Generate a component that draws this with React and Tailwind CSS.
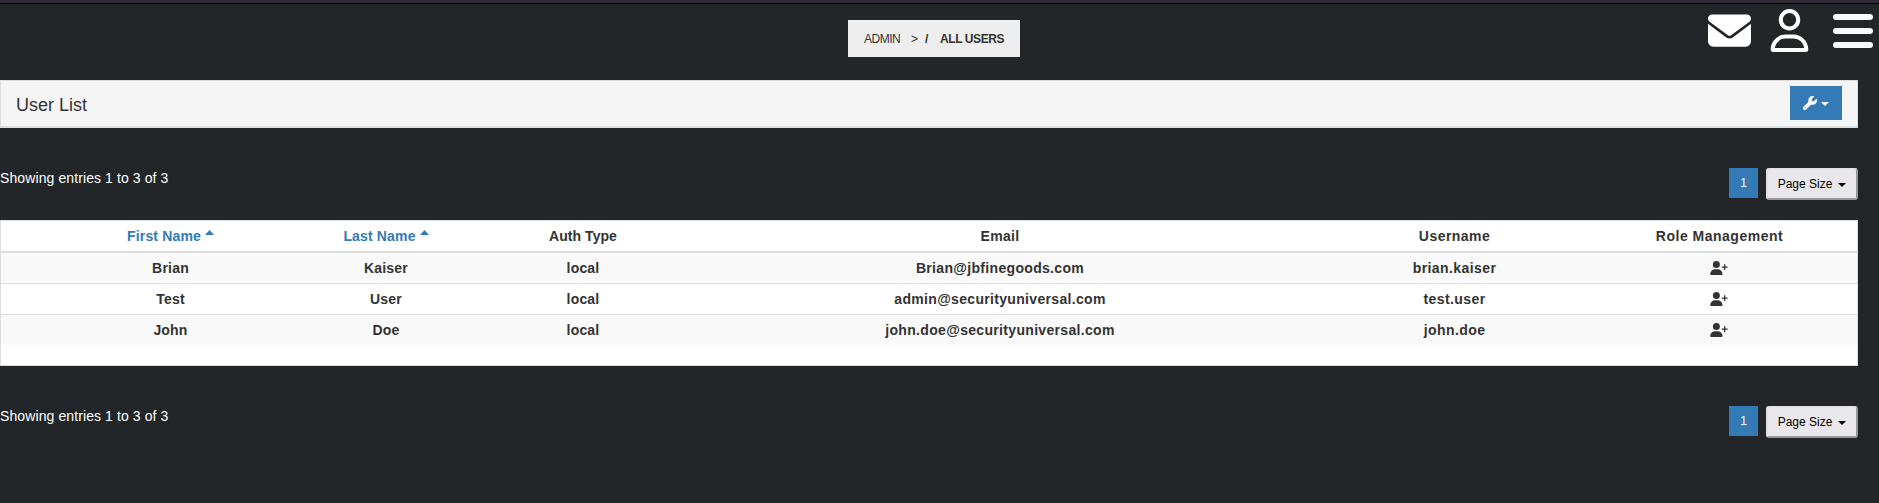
import { FaEnvelope, FaRegUser, FaUserPlus, FaWrench } from "react-icons/fa6";

const users = [
  { first: "Brian", last: "Kaiser", auth: "local", email: "Brian@jbfinegoods.com", username: "brian.kaiser" },
  { first: "Test", last: "User", auth: "local", email: "admin@securityuniversal.com", username: "test.user" },
  { first: "John", last: "Doe", auth: "local", email: "john.doe@securityuniversal.com", username: "john.doe" },
];

const columns = "grid grid-cols-[61px_217px_214px_180px_654px_255px_275px] items-center text-center";

function CaretDown({ className = "" }) {
  return (
    <svg viewBox="0 0 8 4" className={`h-1 w-2 fill-current ${className}`}>
      <path d="M0 0h8L4 4z" />
    </svg>
  );
}

function SortLabel({ children }) {
  return (
    <span className="flex justify-center tracking-[0.15px] text-[#337ab7]">
      {children}
      <svg viewBox="0 0 9 5" className="mt-1 ml-1 h-[5px] w-[9px] fill-current">
        <path d="M4.5 0L9 5H0z" />
      </svg>
    </span>
  );
}

function Pager() {
  return (
    <div className="flex h-8 w-[1858px] items-start">
      <p className="grow text-[14px] leading-5 tracking-[0.1px] text-white">Showing entries 1 to 3 of 3</p>
      <button className="h-[30px] w-[29px] bg-[#337ab7] pb-px text-[12px] text-white">1</button>
      <button className="ml-2 flex h-8 w-[92px] items-center justify-center rounded-[3px] border-2 border-t-[#e3e3e3] border-l-[#e3e3e3] border-r-[#979797] border-b-[#979797] bg-[#e9e7ec] text-[12px] text-black">
        Page Size
        <CaretDown className="mt-0.5 ml-1.5" />
      </button>
    </div>
  );
}

export default function App() {
  return (
    <div className="h-[503px] w-[1879px] overflow-hidden bg-[#222629] font-['Liberation_Sans',Arial,sans-serif] text-[#333]">
      <div className="h-1 border-b border-black bg-[#2e2a36]" />
      <header className="grid h-[76px] grid-cols-[848px_172px_1fr] items-start">
        <nav className="col-start-2 mt-4 flex h-[37px] items-center bg-[#eee] pl-4 text-[12px] whitespace-pre">
          <span className="w-[47px] tracking-[-0.5px]">ADMIN</span>
          <span className="w-[14px]">&gt;</span>
          <span className="w-[15px] font-bold">/</span>
          <b className="tracking-[-0.4px]">ALL USERS</b>
        </nav>
        <div className="flex justify-end pr-[6px] text-white">
          <FaEnvelope className="mt-[4.5px] mr-[16.5px] size-[43px]" />
          <FaRegUser className="mt-[5px] mr-[22.5px] size-[43px]" />
          <div className="mt-[10px] flex flex-col gap-2">
            <i className="h-1.5 w-10 rounded-full bg-[#f8f9fa]" />
            <i className="h-1.5 w-10 rounded-full bg-[#f8f9fa]" />
            <i className="h-1.5 w-10 rounded-full bg-[#f8f9fa]" />
          </div>
        </div>
      </header>

      <section className="flex h-12 w-[1858px] items-start justify-between border border-b-2 border-[#ddd] bg-[#f5f5f5] px-[15px]">
        <h1 className="mt-[11px] text-[18px] leading-[26px]">User List</h1>
        <button className="mt-[5px] flex h-[34px] w-[52px] items-center justify-center bg-[#337ab7] text-white">
          <FaWrench className="size-[14px]" />
          <CaretDown className="mt-0.5 ml-1" />
        </button>
      </section>

      <div className="mt-10">
        <Pager />
      </div>

      <section className="mt-5 h-[146px] w-[1858px] border border-[#ddd] bg-white text-[14px] leading-5 font-bold">
        <div className={`${columns} h-8 border-b-2 border-[#ddd]`}>
          <span />
          <SortLabel>First Name</SortLabel>
          <SortLabel>Last Name</SortLabel>
          <span className="tracking-[0.05px]">Auth Type</span>
          <span className="tracking-[0.3px]">Email</span>
          <span className="tracking-[0.45px]">Username</span>
          <span className="tracking-[0.5px]">Role Management</span>
        </div>
        {users.map((u) => (
          <div key={u.username} className={`${columns} h-[31px] border-b border-[#ddd] odd:bg-white even:bg-[#f9f9f9] last:h-[30px] last:border-b-0`}>
            <span />
            <span className="tracking-[0.2px]">{u.first}</span>
            <span className="tracking-[0.2px]">{u.last}</span>
            <span className="tracking-[0.2px]">{u.auth}</span>
            <span className="tracking-[0.32px]">{u.email}</span>
            <span className="tracking-[0.42px]">{u.username}</span>
            <FaUserPlus className="mr-[2px] h-[14px] w-[18px] justify-self-center" />
          </div>
        ))}
      </section>

      <div className="mt-10">
        <Pager />
      </div>
    </div>
  );
}
